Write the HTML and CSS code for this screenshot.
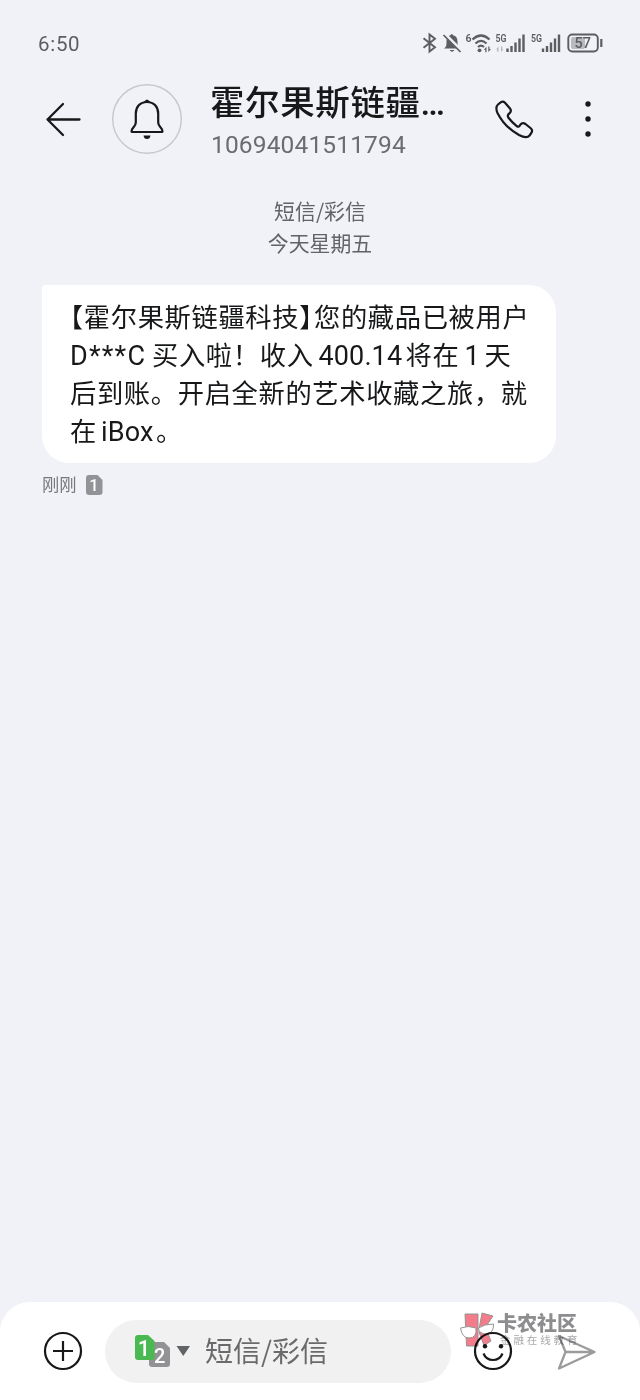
FILE: index.html
```html
<!DOCTYPE html>
<html lang="zh-CN">
<head>
<meta charset="utf-8">
<title>短信</title>
<link rel="stylesheet" href="styles.css">
</head>
<body>
<div class="screen">
  <div class="status">
    <span class="clock">6:50</span>
    <svg class="status-icons" width="184" height="26" viewBox="420 30 184 26">
      <g fill="none" stroke="#5c5d60" stroke-width="1.900">
        <path d="M423.500 38.200L435 47.300L429.500 51.500V34.500L435 38.700L423.500 47.800"/>
        <path d="M472.500 39.500Q481 31.500 489.500 39.500M475.500 43.500Q481 38.200 486.500 43.500M478 47Q481 44.300 484 47" stroke-width="2.200"/>
        <rect x="568.300" y="34.500" width="29.500" height="17" rx="4"/>
        <path d="M601.300 39V47" stroke-width="2.200"/>
      </g>
      <g fill="#5c5d60">
        <path d="M444 48.500C446.500 47 446.500 45 446.500 42C446.500 37 448.500 35.800 450.500 35.300Q451.800 32.800 453 35.300C456 35.800 457.500 38 457.500 42C457.500 45 458 47 460 48.500Z"/>
        <path d="M449.500 50H454.500Q452 53.500 449.500 50Z"/>
        <circle cx="479.500" cy="50.300" r="1.900"/>
        <path d="M483.800 49.800l2.700-3v5.500h-1.200v-2.500zM491 49l-2.700 3v-5.500h1.200v2.500z"/>
        <path d="M506.300 48.500h2.400V52h-2.400zM510.300 46h2.400v6h-2.400zM514.300 42.500h2.400V52h-2.400zM518.300 38.500h2.400V52h-2.400zM522.300 34.500h2.400V52h-2.400z"/>
        <path d="M541.800 48.500h2.400V52h-2.400zM545.800 46h2.400v6h-2.400zM549.800 42.500h2.400V52h-2.400zM553.800 38.500h2.400V52h-2.400zM557.800 34.500h2.400V52h-2.400z"/>
      </g>
      <path d="M444.500 34L461 50.500" stroke="#f1f2f7" stroke-width="3.500"/>
      <path d="M443.500 35L460.500 52" stroke="#5c5d60" stroke-width="1.700"/>
      <path d="M496 49.500l2.500-3v5.500h-1.200v-2.500zM503.500 49l-2.500 3v-5.500h1.200v2.500z" fill="#b5b6ba"/>
      <rect x="571" y="37" width="14" height="12" rx="2" fill="#b9babd"/>
      <g class="status-text" fill="#5c5d60">
        <text x="465.500" y="41.500" font-size="10.500">6</text>
        <text x="495.500" y="42" font-size="10.500" textLength="11" lengthAdjust="spacingAndGlyphs">5G</text>
        <text x="531" y="42" font-size="10.500" textLength="11" lengthAdjust="spacingAndGlyphs">5G</text>
        <text class="charge" x="574.500" y="48" font-size="14" textLength="16.500" lengthAdjust="spacingAndGlyphs">57</text>
      </g>
    </svg>
  </div>

  <header class="header">
    <svg class="back" width="40" height="40" viewBox="0 0 40 40" fill="none" stroke="#17181a" stroke-width="2.300" stroke-linecap="round" stroke-linejoin="round"><path d="M36.500 20.500H4.500M20 5L4.500 20.500L20 36"/></svg>
    <svg class="avatar" width="70" height="70" viewBox="0 0 70 70">
      <circle cx="35" cy="35" r="34.300" fill="none" stroke="#c6c7ca" stroke-width="1.400"/>
      <path d="M35 18C28 18 23.800 23 23.800 29.500V38.500C23.800 43 19.500 43.500 19.500 47.500Q19.500 48 20.500 48H49.500Q50.500 48 50.500 47.500C50.500 43.500 46.200 43 46.200 38.500V29.500C46.200 23 42 18 35 18Z" fill="none" stroke="#17181a" stroke-width="2.200"/>
      <path d="M32 18Q35 13 38 18ZM31.500 51.500H38.500Q38 55 35 55T31.500 51.500Z" fill="#17181a"/>
    </svg>
    <div class="contact">
      <div class="name">霍尔果斯链疆<span class="ellipsis">…</span></div>
      <div class="number">10694041511794</div>
    </div>
    <svg class="call" width="40" height="40" viewBox="0 0 40 40" fill="none" stroke="#17181a" stroke-width="2.200" stroke-linejoin="round"><path d="M4 4.500L7 2.200Q9 .8 11 2.700L16 8.500Q17.800 11 15.800 13Q12.800 15 14.300 17.500Q18 22.500 23 26.300Q25 27.500 26.500 24.500Q28.500 22 31.500 24L37 28.500Q39 30.500 37.300 33L35.500 35.500C33.500 38 30 37.500 25 35C16 30 8 22 3.500 13C1.800 9 1.800 6.500 4 4.500Z"/></svg>
    <svg class="more" width="8" height="40" viewBox="0 0 8 40" fill="#17181a"><circle cx="4" cy="5" r="2.700"/><circle cx="4" cy="20" r="2.700"/><circle cx="4" cy="35" r="2.700"/></svg>
  </header>

  <main class="thread">
    <div class="thread-info"><div>短信/彩信</div><div>今天星期五</div></div>
    <div class="bubble">
      <div><span class="half">【</span>霍尔果斯链疆科技<span class="half close">】</span>您的藏品已被用户</div>
      <div><span class="latin sender">D***C</span>买入啦！收入<span class="latin amount">400.14</span>将在<span class="latin day">1</span>天</div>
      <div>后到账。开启全新的艺术收藏之旅，就</div>
      <div>在<span class="latin brand">iBox</span>。</div>
    </div>
    <div class="meta">
      <span>刚刚</span>
      <svg width="17" height="20" viewBox="0 0 17 20"><path d="M3 0H11.500L16.500 5V17Q16.500 20 13.500 20H3Q0 20 0 17V3Q0 0 3 0Z" fill="#929396"/><text class="sim-digit" x="8" y="15.800" font-size="16.500" text-anchor="middle" fill="#fff">1</text></svg>
    </div>
  </main>

  <footer class="composer">
    <svg class="plus" width="40" height="40" viewBox="0 0 40 40" fill="none" stroke="#17181a" stroke-width="2.200"><circle cx="20" cy="20" r="18"/><path d="M10 20H30M20 10V30"/></svg>
    <div class="field">
      <svg class="sim" width="56" height="34" viewBox="134 1334 56 34">
        <path d="M152 1341H164L170 1347V1363Q170 1366 167 1366H152Q149 1366 149 1363V1344Q149 1341 152 1341Z" fill="#929294"/>
        <path d="M138 1334H148L154.500 1340V1356Q154.500 1359 151.500 1359H138Q135 1359 135 1356V1337Q135 1334 138 1334Z" fill="#4bb951"/>
        <path d="M176.500 1345H190L183.300 1355Z" fill="#626366"/>
        <text class="sim-digit" x="144" y="1355" font-size="22" text-anchor="middle" fill="#fff">1</text>
        <text class="sim-digit" x="159.800" y="1361.500" font-size="20" text-anchor="middle" fill="#fff">2</text>
      </svg>
      <span class="placeholder">短信/彩信</span>
    </div>
    <svg class="smile" width="40" height="40" viewBox="0 0 40 40" fill="none" stroke="#17181a" stroke-width="2.200"><circle cx="20" cy="20" r="18"/><path d="M10.500 22.500Q13 29 20 29T29.500 22.500"/><g fill="#17181a" stroke="none"><circle cx="12" cy="15.300" r="2.200"/><circle cx="28" cy="15.300" r="2.200"/></g></svg>
    <svg class="send" width="40" height="38" viewBox="0 0 40 38" fill="none" stroke="#9b9b9d" stroke-width="2.300" stroke-linejoin="round"><path d="M2 3L37.500 19L2 35.500L8.500 19ZM8.500 19H37"/></svg>
    <div class="watermark">
      <svg width="36" height="36" viewBox="460 1312 36 36">
        <g fill="#f36d7d" stroke="#888" stroke-width="1"><path d="M465 1314H478V1346H466.500Z"/><path d="M482 1313L493 1316L487 1325L479 1329Z"/><path d="M479 1332L486 1329L491 1341L484 1345.500Z"/></g>
        <g fill="#fff" stroke="#888" stroke-width="1"><path d="M460.500 1328Q468 1325 476 1328Q477 1338 469 1338Q462 1338 460.500 1328Z"/><path d="M478.500 1328Q484 1324 493.500 1324Q494 1333 486.500 1334Q479 1334 478.500 1328Z"/></g>
      </svg>
      <div class="watermark-text"><div class="wm-title">卡农社区</div><div class="wm-sub">金融在线教育</div></div>
    </div>
  </footer>
</div>
</body>
</html>
```
FILE: styles.css
```css
* { box-sizing: border-box; }
body { margin: 0; }
.screen {
  width: 640px;
  height: 1400px;
  display: flex;
  flex-direction: column;
  background: #f1f2f7;
  color: #17181a;
  font-family: "Noto Sans CJK SC", sans-serif;
  overflow: hidden;
  white-space: nowrap;
}
svg { display: block; flex: none; }

.status {
  height: 84px;
  padding: 30px 36px 0 38px;
  display: flex;
  justify-content: space-between;
}
.clock {
  font: 400 20.500px/28px Roboto, sans-serif;
  letter-spacing: .7px;
  color: #5c5d60;
}
.status-text { font-family: Roboto, sans-serif; font-weight: 600; }
.charge { font-weight: 500; }

.header { height: 74px; display: flex; padding-left: 43px; }
.back { margin-top: 15px; }
.avatar { margin-left: 29px; }
.contact { width: 240px; margin: -3px 0 0 28px; }
.name { font-size: 34.500px; font-weight: 500; line-height: 38px; letter-spacing: .6px; }
.ellipsis { display: inline-block; width: 26px; font-family: Roboto, sans-serif; letter-spacing: 0; }
.number {
  margin-top: 8px;
  padding-left: 1px;
  font: 400 24.500px/30px Roboto, sans-serif;
  letter-spacing: .15px;
  color: #6b6c70;
}
.call { margin: 16px 0 0 44px; }
.more { margin: 15px 0 0 50px; }

.thread { flex: 1; padding: 36px 42px 0; }
.thread-info { text-align: center; font-size: 20.900px; line-height: 32px; color: #626366; }
.bubble {
  width: 514px;
  height: 178px;
  margin-top: 27px;
  padding: 12px 28px;
  border-radius: 3px 27px 27px 27px;
  background: #fff;
  font-size: 26.300px;
  line-height: 38px;
  letter-spacing: .63px;
}
.bubble > div { height: 38px; }
.half { font-feature-settings: "halt"; }
.close { margin-right: 1px; }
.latin { display: inline-block; font-family: Roboto, sans-serif; font-size: 27px; }
.sender { width: 82px; letter-spacing: 1.200px; }
.amount { width: 87px; margin-left: 5px; letter-spacing: .1px; }
.day { width: 17px; margin: 0 3px 0 5px; }
.brand { width: 55px; margin-left: 4px; letter-spacing: .2px; }
.meta {
  display: flex;
  align-items: center;
  gap: 9px;
  height: 24px;
  margin-top: 10px;
  font-size: 17.300px;
  color: #77787c;
}
.meta span { margin-top: -3px; }
.sim-digit { font-family: Roboto, sans-serif; font-weight: 500; }

.composer {
  position: relative;
  height: 98px;
  padding: 18px 0 0 43px;
  display: flex;
  border-radius: 30px 30px 0 0;
  background: #fff;
}
.plus { margin-top: 11px; }
.field {
  width: 346px;
  height: 63px;
  margin-left: 22px;
  padding-left: 29px;
  display: flex;
  align-items: center;
  border-radius: 32px;
  background: #f1f1f1;
}
.placeholder { margin: -4px 0 0 15px; font-size: 28px; line-height: 40px; color: #6a6a6c; }
.smile { margin: 11px 0 0 22px; }
.send { margin: 13px 0 0 44px; }
.watermark {
  position: absolute;
  left: 460px;
  top: 10px;
  display: flex;
  gap: 1px;
  opacity: .9;
  mix-blend-mode: multiply;
}
.wm-title { font-size: 20px; font-weight: 900; line-height: 22px; color: #818184; }
.wm-sub { padding-left: 3px; font-size: 10.500px; line-height: 12px; letter-spacing: 2.900px; color: #a0a0a3; }
```
